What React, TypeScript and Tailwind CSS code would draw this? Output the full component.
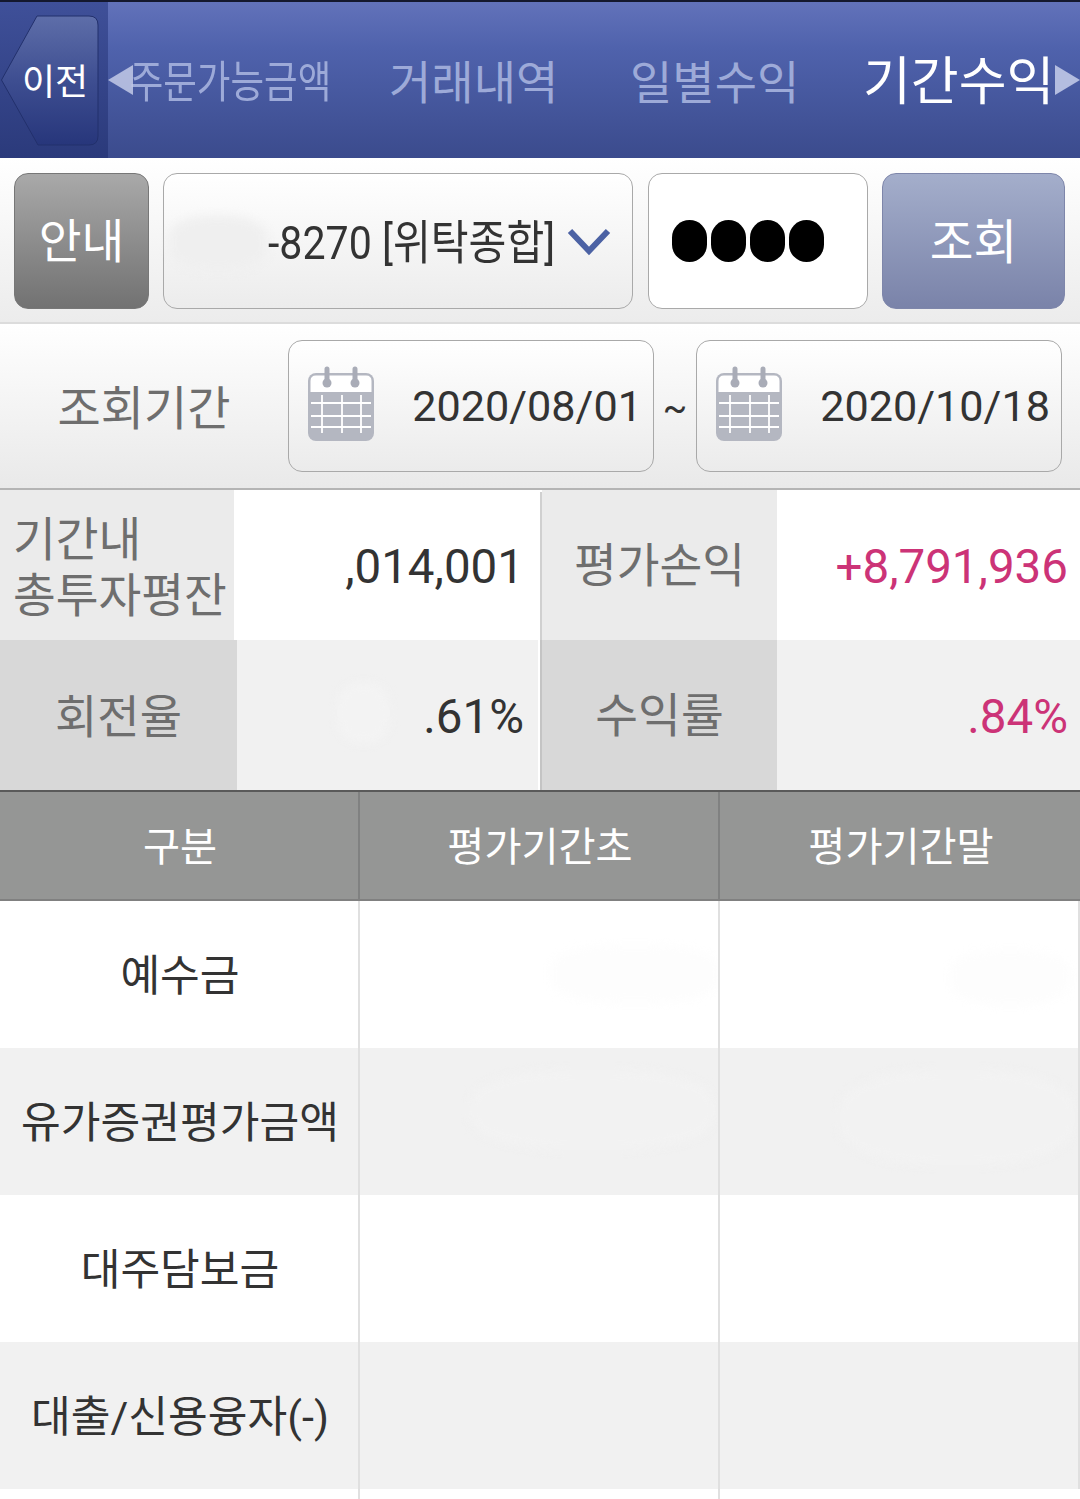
const KR = "font-['Roboto','Noto_Sans_CJK_KR',sans-serif]";

function Calendar() {
  return (
    <svg width="68" height="76" viewBox="0 0 68 76" className="mb-[4px] shrink-0">
      <rect x="1" y="7" width="66" height="68" rx="8" fill="#b4b7c1" />
      <path d="M3.5 26 V15 Q3.5 9.5 9 9.5 H59 Q64.5 9.5 64.5 15 V26 Z" fill="#ffffff" />
      <path d="M20 3V15M48 3V15" stroke="#a9acb7" strokeWidth="5" strokeLinecap="round" />
      <circle cx="20" cy="17" r="4.5" fill="#a9acb7" />
      <circle cx="48" cy="17" r="4.5" fill="#a9acb7" />
      <path d="M4 37H64M4 50H64M4 61H64M15 29V67M35 29V67M54 29V67" stroke="#ffffff" strokeWidth="1.8" />
    </svg>
  );
}

function DateBox({ value }: { value: string }) {
  return (
    <div className="flex h-[132px] w-[366px] items-center rounded-[14px] border border-[#a9a9a9] bg-gradient-to-b from-white to-[#ebebeb] pl-[18px] pr-[11px]">
      <Calendar />
      <span className="ml-auto mt-[2px] text-[43.2px] leading-none text-[#333333]">{value}</span>
    </div>
  );
}

function Smudge({ className }: { className: string }) {
  return <div className={`absolute rounded-[40%] blur-[5px] ${className}`} />;
}

function Row({ label, shade, mid, end }: { label: string; shade?: boolean; mid?: React.ReactNode; end?: React.ReactNode }) {
  const bg = shade ? "bg-[#f1f1f1]" : "bg-white";
  return (
    <div className={`grid h-[147px] grid-cols-3 ${bg}`}>
      <div className="flex items-center justify-center border-r-2 border-[#e0e0e0] pl-[2px] pt-[6px] text-[43.2px] text-[#333333]">{label}</div>
      <div className="relative overflow-hidden border-r-2 border-[#e0e0e0]">{mid}</div>
      <div className="relative overflow-hidden border-r-2 border-[#e0e0e0]">{end}</div>
    </div>
  );
}

export default function App() {
  return (
    <div className={`h-[1499px] w-[1080px] overflow-hidden bg-white ${KR}`}>
      {/* Header */}
      <div className="flex h-[158px] border-t-2 border-[#14182e] bg-gradient-to-b from-[#6272ba] via-[#4f62ac] via-30% to-[#3b4b8d]">
        <div className="relative flex w-[108px] shrink-0 items-center bg-gradient-to-b from-[#3f5099] to-[#2b3a7b]">
          <svg width="100" height="134" viewBox="0 0 100 134" className="absolute left-0 top-[12px]">
            <defs>
              <linearGradient id="back" x1="0" y1="0" x2="0" y2="1">
                <stop offset="0" stopColor="#5e6ea9" />
                <stop offset="0.5" stopColor="#3e4e91" />
                <stop offset="1" stopColor="#27367b" />
              </linearGradient>
            </defs>
            <path d="M1.5 66 L37 2 H89 Q98 2 98 11 V122 Q98 131 89 131 H38 Z" fill="url(#back)" stroke="#22306c" strokeWidth="1" />
          </svg>
          <span className="relative ml-[22px] mt-[6px] text-[36px] leading-none text-white">이전</span>
        </div>
        <div className="relative flex flex-1 items-center">
          <div className="flex w-[242px] justify-center pt-[6px] pl-[2px]">
            <span className="origin-center scale-x-[0.83] whitespace-nowrap text-[44px] leading-none text-[#9daad8]">주문가능금액</span>
          </div>
          <span className="ml-[39px] mt-[6px] w-[166px] whitespace-nowrap text-[46px] leading-none text-[#9daad8]">거래내역</span>
          <span className="ml-[75px] mt-[6px] w-[168px] whitespace-nowrap text-[46px] leading-none text-[#9daad8]">일별수익</span>
          <span className="ml-[65px] mt-[6px] whitespace-nowrap text-[52px] leading-none text-white">기간수익</span>
          <svg width="25" height="30" viewBox="0 0 25 30" className="absolute left-0 top-[63px]">
            <path d="M0 15 L25 0 V30 Z" fill="#c3cae8" fillOpacity="0.85" />
          </svg>
          <svg width="25" height="30" viewBox="0 0 25 30" className="absolute right-0 top-[63px]">
            <path d="M25 15 L0 0 V30 Z" fill="#b4bde0" />
          </svg>
        </div>
      </div>

      {/* Toolbar */}
      <div className="flex h-[166px] items-center border-b-2 border-[#dcdcdc] bg-gradient-to-b from-white to-[#ececec] pl-[14px] pt-[2px]">
        <div className="flex h-[136px] w-[135px] items-center justify-center rounded-[14px] border border-[#777777] bg-gradient-to-b from-[#a9a9a9] to-[#727272] pt-[4px] text-[46.5px] text-white">안내</div>
        <div className="relative ml-[14px] flex h-[136px] w-[470px] items-center rounded-[14px] border border-[#a9a9a9] bg-gradient-to-b from-white to-[#ececec]">
          <Smudge className="left-[5px] top-[42px] h-[55px] w-[98px] bg-[#efefef] blur-[3px]" />
          <span className="relative ml-[104px] mt-[2px] inline-block w-[287px] origin-left scale-x-[0.875] whitespace-nowrap text-[47px] leading-none text-[#333333]">-8270 [위탁종합]</span>
          <svg width="44" height="30" viewBox="0 0 44 30" className="absolute left-[403px] top-[53px]">
            <path d="M3 4 L22 24 L41 4" fill="none" stroke="#4c62a4" strokeWidth="6" />
          </svg>
        </div>
        <div className="ml-[15px] flex h-[136px] w-[220px] items-center gap-[4px] rounded-[14px] border border-[#a9a9a9] bg-white pl-[23px]">
          <span className="h-[42px] w-[35px] rounded-full bg-black" />
          <span className="h-[42px] w-[35px] rounded-full bg-black" />
          <span className="h-[42px] w-[35px] rounded-full bg-black" />
          <span className="h-[42px] w-[35px] rounded-full bg-black" />
        </div>
        <div className="ml-[14px] flex h-[136px] w-[183px] items-center justify-center rounded-[14px] border border-[#7e86aa] bg-gradient-to-b from-[#a4aecb] to-[#7a83a9] pt-[5px] text-[47.5px] text-white">조회</div>
      </div>

      {/* Period */}
      <div className="flex h-[166px] items-center border-b-2 border-[#b4b4b4] bg-gradient-to-b from-white to-[#e9e9e9]">
        <div className="w-[288px] pt-[6px] text-center text-[47px] text-[#6e6e6e]">조회기간</div>
        <DateBox value="2020/08/01" />
        <div className="w-[42px] pt-[4px] text-center text-[36px] leading-none text-[#333333]">~</div>
        <DateBox value="2020/10/18" />
      </div>

      {/* Summary */}
      <div className="flex h-[150px]">
        <div className="flex w-[234px] flex-col justify-center bg-[#ebebeb] pl-[13px] pt-[5px] text-[46.5px] leading-[56px] text-[#6e6e6e]">
          <span>기간내</span>
          <span className="whitespace-nowrap">총투자평잔</span>
        </div>
        <div className="flex w-[306px] items-center justify-end bg-white pr-[16px] pt-[6px] text-[47.5px] text-[#333333]">,014,001</div>
        <div className="mt-[2px] w-[2px] bg-[#d0d0d0]" />
        <div className="flex w-[235px] items-center justify-center bg-[#ebebeb] pt-[4px] text-[46.5px] text-[#6e6e6e]">평가손익</div>
        <div className="flex flex-1 items-center justify-end bg-white pr-[12px] pt-[6px] text-[47.5px] text-[#cc3377]">+8,791,936</div>
      </div>
      <div className="flex h-[150px]">
        <div className="flex w-[237px] items-center justify-center bg-[#d8d8d8] pt-[4px] text-[46px] text-[#6e6e6e]">회전율</div>
        <div className="relative flex w-[301px] items-center justify-end bg-[#f1f1f1] pr-[14px] pt-[5px] text-[47.5px] text-[#333333]">
          <Smudge className="left-[100px] top-[43px] h-[60px] w-[53px] bg-[#f3f3f3]" />
          <span className="relative">.61%</span>
        </div>
        <div className="w-[2px] bg-white" />
        <div className="w-[2px] bg-[#c4c4c4]" />
        <div className="flex w-[235px] items-center justify-center bg-[#d8d8d8] pt-[4px] text-[46.5px] text-[#6e6e6e]">수익률</div>
        <div className="flex flex-1 items-center justify-end bg-[#f1f1f1] pr-[12px] pt-[5px] text-[47.5px] text-[#cc3377]">.84%</div>
      </div>

      {/* Table */}
      <div className="grid h-[111px] grid-cols-3 border-y-2 border-t-[#5a5a5a] border-b-[#808080] bg-[#959695] text-[40.3px] text-white">
        <div className="flex items-center justify-center border-r-2 border-[#808181] pl-[2px] pt-[6px]">구분</div>
        <div className="flex items-center justify-center border-r-2 border-[#808181] pl-[2px] pt-[6px]">평가기간초</div>
        <div className="flex items-center justify-center pl-[2px] pt-[6px]">평가기간말</div>
      </div>
      <Row
        label="예수금"
        mid={<Smudge className="left-[190px] top-[44px] h-[58px] w-[170px] bg-[#fdfdfd]" />}
        end={<Smudge className="left-[230px] top-[49px] h-[55px] w-[120px] bg-[#fdfdfd]" />}
      />
      <Row
        label="유가증권평가금액"
        shade
        mid={<Smudge className="left-[110px] top-[22px] h-[80px] w-[245px] bg-[#f2f2f2]" />}
        end={<Smudge className="left-[120px] top-[22px] h-[95px] w-[235px] bg-[#f2f2f2]" />}
      />
      <Row label="대주담보금" />
      <Row label="대출/신용융자(-)" shade />
      <div className="grid h-[10px] grid-cols-3 bg-white">
        <div className="border-r-2 border-[#e0e0e0]" />
        <div className="border-r-2 border-[#e0e0e0]" />
      </div>
    </div>
  );
}
